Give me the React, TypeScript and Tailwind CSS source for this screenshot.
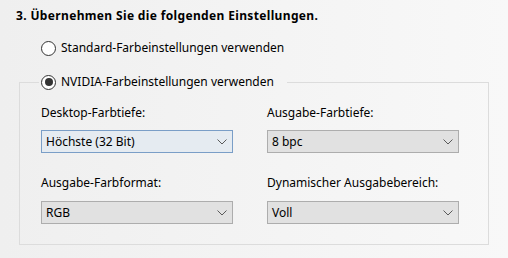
type SelectProps = { value: string; focused?: boolean };

const Chevron = () => (
  <svg width="10" height="6" viewBox="0 0 10 6" className="mr-[1px]">
    <path d="M0.5 0.5 L5 5 L9.5 0.5" fill="none" stroke="#5a5a5a" strokeWidth="1" />
  </svg>
);

const FakeSelect = ({ value, focused }: SelectProps) => (
  <div
    className={`flex h-[23px] w-[192px] items-center justify-between border pl-[4px] pr-[4px] ${
      focused ? "border-[#7a9ec7] bg-[#e5ebf1]" : "border-[#adadad] bg-[#e1e1e1]"
    }`}
  >
    <span className="text-[12px] leading-[16px] text-black">{value}</span>
    <Chevron />
  </div>
);

const Radio = ({ checked, label }: { checked?: boolean; label: string }) => (
  <label className="flex items-center gap-[5px] text-[12px] leading-[16px] text-black">
    <span className="flex h-[15px] w-[15px] items-center justify-center rounded-full border border-[#333] bg-white">
      {checked && <span className="h-[8px] w-[8px] rounded-full bg-[#333]" />}
    </span>
    {label}
  </label>
);

export default function App() {
  return (
    <div
      className="flex h-[258px] w-[508px] flex-col bg-gradient-to-r from-[#efefef] to-[#f8f8f8] pt-[8px]"
      style={{ fontFamily: '"Noto Sans", "Open Sans", sans-serif' }}
    >
      <h1 className="pl-[16px] text-[12px] font-bold leading-[16px] tracking-[0.35px] text-black">
        3. Übernehmen Sie die folgenden Einstellungen.
      </h1>

      <div className="mt-[16px] pl-[41px]">
        <Radio label="Standard-Farbeinstellungen verwenden" />
      </div>

      {/* Group box */}
      <fieldset className="ml-[19px] mt-[18px] w-[470px] border border-[#dcdcdc] pb-[20px] pl-[21px]">
        <legend className="-ml-[2px] pl-[2px] pr-[13px]">
          <Radio checked label="NVIDIA-Farbeinstellungen verwenden" />
        </legend>

        <div className="grid grid-cols-[192px_192px] gap-x-[34px] pt-[15px]">
          <div className="flex flex-col gap-[9px]">
            <span className="text-[12px] leading-[16px] text-black">Desktop-Farbtiefe:</span>
            <FakeSelect value="Höchste (32 Bit)" focused />
          </div>
          <div className="flex flex-col gap-[9px]">
            <span className="text-[12px] leading-[16px] text-black">Ausgabe-Farbtiefe:</span>
            <FakeSelect value="8 bpc" />
          </div>
          <div className="mt-[22px] flex flex-col gap-[10px]">
            <span className="text-[12px] leading-[16px] text-black">Ausgabe-Farbformat:</span>
            <FakeSelect value="RGB" />
          </div>
          <div className="mt-[22px] flex flex-col gap-[10px]">
            <span className="text-[12px] leading-[16px] text-black">Dynamischer Ausgabebereich:</span>
            <FakeSelect value="Voll" />
          </div>
        </div>
      </fieldset>
    </div>
  );
}
